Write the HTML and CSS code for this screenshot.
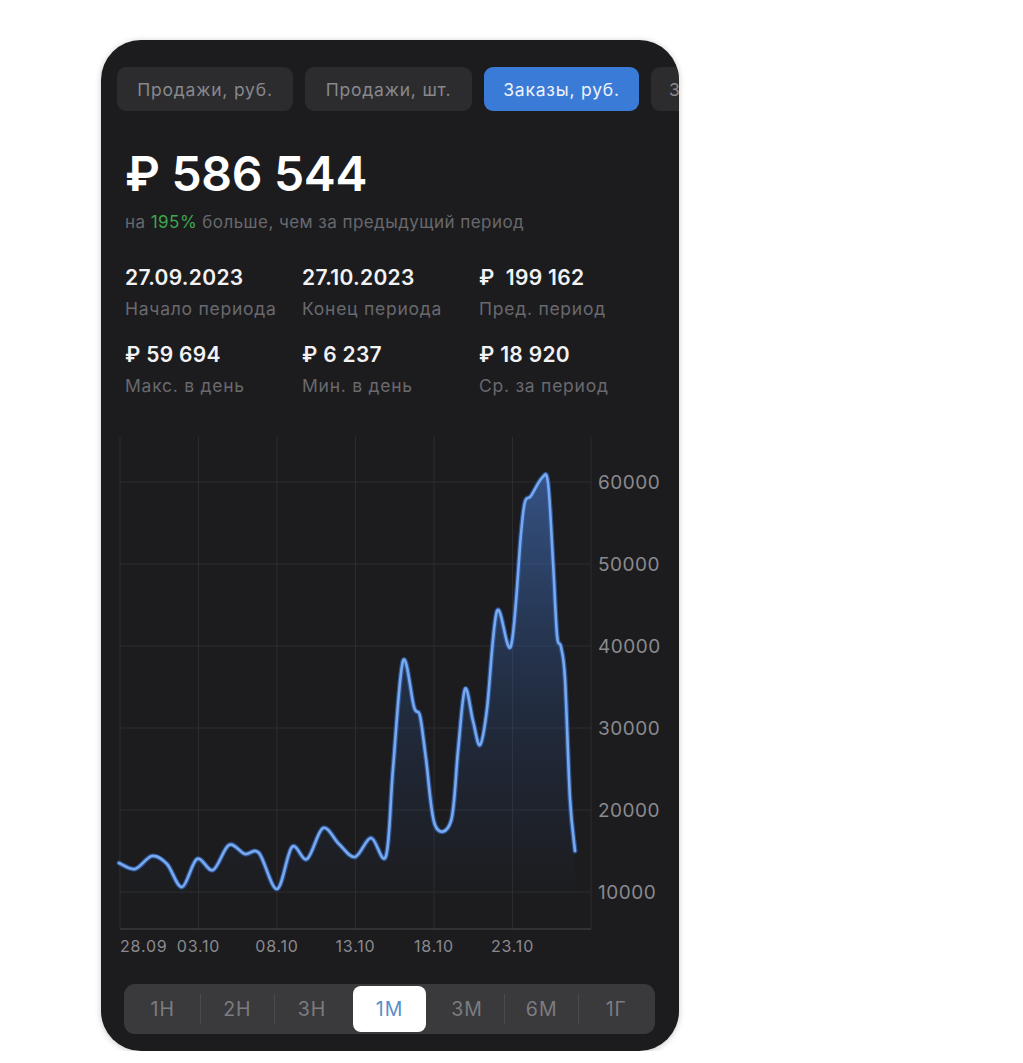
FILE: index.html
```html
<!DOCTYPE html>
<html lang="ru">
<head>
<meta charset="utf-8">
<title>Заказы</title>
<link rel="stylesheet" href="styles.css">
</head>
<body>
<div class="card">
  <div class="tabs">
    <div class="tab t1">Продажи, руб.</div>
    <div class="tab t2">Продажи, шт.</div>
    <div class="tab t3 active">Заказы, руб.</div>
    <div class="tab t4">Заказы, шт.</div>
  </div>
  <div class="total">₽ 586 544</div>
  <div class="sub">на <span class="up">195%</span> больше, чем за предыдущий период</div>
  <div class="stats">
    <div class="stat"><div class="val">27.09.2023</div><div class="lbl">Начало периода</div></div>
    <div class="stat"><div class="val">27.10.2023</div><div class="lbl">Конец периода</div></div>
    <div class="stat"><div class="val">₽&nbsp;&nbsp;199 162</div><div class="lbl">Пред. период</div></div>
    <div class="stat"><div class="val">₽ 59 694</div><div class="lbl">Макс. в день</div></div>
    <div class="stat"><div class="val">₽ 6 237</div><div class="lbl">Мин. в день</div></div>
    <div class="stat"><div class="val">₽ 18 920</div><div class="lbl">Ср. за период</div></div>
  </div>
  <svg class="chart" width="578" height="530" viewBox="101 430 578 530" xmlns="http://www.w3.org/2000/svg">
    <defs>
      <linearGradient id="fillg" gradientUnits="userSpaceOnUse" x1="0" y1="479" x2="0" y2="905">
        <stop offset="0" stop-color="#4a7fd6" stop-opacity="0.55"/>
        <stop offset="0.5" stop-color="#3563b0" stop-opacity="0.25"/>
        <stop offset="1" stop-color="#2a4f90" stop-opacity="0"/>
      </linearGradient>
    </defs>
    <g class="grid">
      <line x1="120" y1="438" x2="120" y2="930"/>
      <line x1="198.5" y1="438" x2="198.5" y2="930"/>
      <line x1="277" y1="438" x2="277" y2="930"/>
      <line x1="355.5" y1="438" x2="355.5" y2="930"/>
      <line x1="434" y1="438" x2="434" y2="930"/>
      <line x1="512.5" y1="438" x2="512.5" y2="930"/>
      <line x1="591" y1="438" x2="591" y2="930"/>
      <line x1="120" y1="483" x2="591" y2="483"/>
      <line x1="120" y1="565" x2="591" y2="565"/>
      <line x1="120" y1="647" x2="591" y2="647"/>
      <line x1="120" y1="729" x2="591" y2="729"/>
      <line x1="120" y1="811" x2="591" y2="811"/>
      <line x1="120" y1="893" x2="591" y2="893"/>
    </g>
    <line class="axis" x1="120" y1="930" x2="591" y2="930"/>
    <path class="area" d="M119 864 C121.7 865 129.5 871.2 135 870 S146.7 857.8 152 857 S162 859.8 167 865 S177 888.8 182 888 S191.8 862.8 197 860 S207.7 873.3 213 871 S223.7 848.7 229 846 S240 853.7 245 855 S253.7 848.2 259 854 S271.5 891 277 890 S287 853 292 848 S301.8 863.2 307 860 S317.7 831.5 323 829 S333.7 840.2 339 845 S349.7 859 355 858 S365.8 839.2 371 839 S382.3 868.5 386 857 S390.2 802.5 393 770 S399.5 672.3 403 662 S411.2 698.8 414 708 S418 708.3 420 717 S423.5 741.8 426 760 S430.8 815.7 435 826 S447.2 834.3 451 822 S455.7 774 458 752 S462.5 695 465 690 S470.5 712.7 473 722 S477.7 748 480 746 S484.2 732.3 487 710 S493 622.5 497 612 S507 659.8 511 647 S518.7 559 521 535 S523.3 509.3 525 503 S528.2 501 531 497 S539.2 481.2 542 479 S546.2 470 548 484 S551.5 537.7 553 563 S555.7 621.8 557 636 S559.7 640.7 561 648 S563.5 654.7 565 680 S568.3 771.3 570 800 S574.2 843.3 575 852 L575 930 L119 930 Z"/>
    <path class="line-under" d="M119 864 C121.7 865 129.5 871.2 135 870 S146.7 857.8 152 857 S162 859.8 167 865 S177 888.8 182 888 S191.8 862.8 197 860 S207.7 873.3 213 871 S223.7 848.7 229 846 S240 853.7 245 855 S253.7 848.2 259 854 S271.5 891 277 890 S287 853 292 848 S301.8 863.2 307 860 S317.7 831.5 323 829 S333.7 840.2 339 845 S349.7 859 355 858 S365.8 839.2 371 839 S382.3 868.5 386 857 S390.2 802.5 393 770 S399.5 672.3 403 662 S411.2 698.8 414 708 S418 708.3 420 717 S423.5 741.8 426 760 S430.8 815.7 435 826 S447.2 834.3 451 822 S455.7 774 458 752 S462.5 695 465 690 S470.5 712.7 473 722 S477.7 748 480 746 S484.2 732.3 487 710 S493 622.5 497 612 S507 659.8 511 647 S518.7 559 521 535 S523.3 509.3 525 503 S528.2 501 531 497 S539.2 481.2 542 479 S546.2 470 548 484 S551.5 537.7 553 563 S555.7 621.8 557 636 S559.7 640.7 561 648 S563.5 654.7 565 680 S568.3 771.3 570 800 S574.2 843.3 575 852"/>
    <path class="line" d="M119 864 C121.7 865 129.5 871.2 135 870 S146.7 857.8 152 857 S162 859.8 167 865 S177 888.8 182 888 S191.8 862.8 197 860 S207.7 873.3 213 871 S223.7 848.7 229 846 S240 853.7 245 855 S253.7 848.2 259 854 S271.5 891 277 890 S287 853 292 848 S301.8 863.2 307 860 S317.7 831.5 323 829 S333.7 840.2 339 845 S349.7 859 355 858 S365.8 839.2 371 839 S382.3 868.5 386 857 S390.2 802.5 393 770 S399.5 672.3 403 662 S411.2 698.8 414 708 S418 708.3 420 717 S423.5 741.8 426 760 S430.8 815.7 435 826 S447.2 834.3 451 822 S455.7 774 458 752 S462.5 695 465 690 S470.5 712.7 473 722 S477.7 748 480 746 S484.2 732.3 487 710 S493 622.5 497 612 S507 659.8 511 647 S518.7 559 521 535 S523.3 509.3 525 503 S528.2 501 531 497 S539.2 481.2 542 479 S546.2 470 548 484 S551.5 537.7 553 563 S555.7 621.8 557 636 S559.7 640.7 561 648 S563.5 654.7 565 680 S568.3 771.3 570 800 S574.2 843.3 575 852"/>
    <g class="ylab">
      <text x="598" y="490">60000</text>
      <text x="598" y="572">50000</text>
      <text x="598" y="654">40000</text>
      <text x="598" y="736">30000</text>
      <text x="598" y="818">20000</text>
      <text x="598" y="900">10000</text>
    </g>
    <g class="xlab">
      <text class="first" x="120" y="953">28.09</text>
      <text x="198.5" y="953">03.10</text>
      <text x="277" y="953">08.10</text>
      <text x="355.5" y="953">13.10</text>
      <text x="434" y="953">18.10</text>
      <text x="512.5" y="953">23.10</text>
    </g>
  </svg>
  <div class="seg">
    <div class="seg-item">1Н</div>
    <span class="sep"></span>
    <div class="seg-item">2Н</div>
    <span class="sep"></span>
    <div class="seg-item">3Н</div>
    <span class="sep off"></span>
    <div class="seg-item on">1М</div>
    <span class="sep off"></span>
    <div class="seg-item">3М</div>
    <span class="sep"></span>
    <div class="seg-item">6М</div>
    <span class="sep"></span>
    <div class="seg-item">1Г</div>
  </div>
</div>
</body>
</html>
```

FILE: styles.css
```css
html, body {
  margin: 0;
  padding: 0;
  background: #ffffff;
}
body {
  font-family: Inter, "Noto Sans", "DejaVu Sans", sans-serif;
}
.card {
  box-sizing: border-box;
  width: 578px;
  height: 1011px;
  margin: 40px 0 0 101px;
  background: #1c1c1e;
  border-radius: 40px;
  overflow: hidden;
  box-shadow: 0 1px 6px rgba(0, 0, 0, 0.22);
}
.tabs {
  display: flex;
  gap: 12px;
  padding: 27px 0 0 16px;
  white-space: nowrap;
}
.tab {
  flex: none;
  height: 44px;
  border-radius: 9px;
  background: #2c2c2e;
  color: #88888d;
  font-size: 17.5px;
  letter-spacing: 0.8px;
  display: flex;
  align-items: center;
  justify-content: center;
}
.t1 { width: 176px; }
.t2 { width: 167px; }
.t3 { width: 155px; }
.t4 {
  width: 150px;
  justify-content: flex-start;
  padding-left: 18px;
}
.tab.active {
  background: #3a7bd8;
  color: #eef3fb;
}
.total {
  margin: 39px 0 0 24px;
  font-size: 48px;
  line-height: 48px;
  font-weight: 600;
  color: #ffffff;
  letter-spacing: -0.3px;
}
.sub {
  margin: 14px 0 0 24px;
  font-size: 17px;
  line-height: 20px;
  letter-spacing: 0.45px;
  color: #68686d;
}
.sub .up {
  color: #3ea54d;
}
.stats {
  margin: 33px 0 0 24px;
  display: grid;
  grid-template-columns: repeat(3, 177px);
  row-gap: 21px;
}
.val {
  font-size: 21px;
  line-height: 26px;
  font-weight: 600;
  letter-spacing: 0.3px;
  color: #f2f2f4;
}
.lbl {
  margin-top: 6px;
  font-size: 17.5px;
  line-height: 24px;
  letter-spacing: 0.75px;
  color: #69696e;
}
.chart {
  display: block;
  margin-top: 31px;
}
.grid line {
  stroke: #2c2c2f;
  stroke-width: 1;
}
.axis {
  stroke: #3a3a3d;
  stroke-width: 1.5;
}
.area {
  fill: url(#fillg);
}
.line-under {
  fill: none;
  stroke: #2f5ea8;
  stroke-width: 5;
  stroke-linecap: round;
  stroke-linejoin: round;
  opacity: 0.8;
}
.line {
  fill: none;
  stroke: #78a8ee;
  stroke-width: 2.6;
  stroke-linecap: round;
  stroke-linejoin: round;
}
.ylab text {
  font-family: Inter, "Noto Sans", sans-serif;
  font-size: 19px;
  letter-spacing: 0.5px;
  fill: #8a8a8f;
}
.xlab text {
  font-family: Inter, "Noto Sans", sans-serif;
  font-size: 16px;
  letter-spacing: 0.8px;
  fill: #8a8a8f;
  text-anchor: middle;
}
.xlab text.first {
  text-anchor: start;
}
.seg {
  box-sizing: border-box;
  margin: 25px 24px 0 23px;
  height: 50px;
  padding: 2px;
  border-radius: 11px;
  background: #3a3a3c;
  display: flex;
  align-items: center;
}
.seg-item {
  flex: 1;
  height: 46px;
  border-radius: 8px;
  display: flex;
  align-items: center;
  justify-content: center;
  font-size: 19.5px;
  letter-spacing: 1px;
  color: #7c7c81;
}
.seg-item.on {
  background: #ffffff;
  color: #5a8ecb;
  margin: 0 3px;
}
.sep {
  flex: none;
  width: 1px;
  height: 30px;
  background: #4b4b4e;
}
.sep.off {
  background: transparent;
}
```
